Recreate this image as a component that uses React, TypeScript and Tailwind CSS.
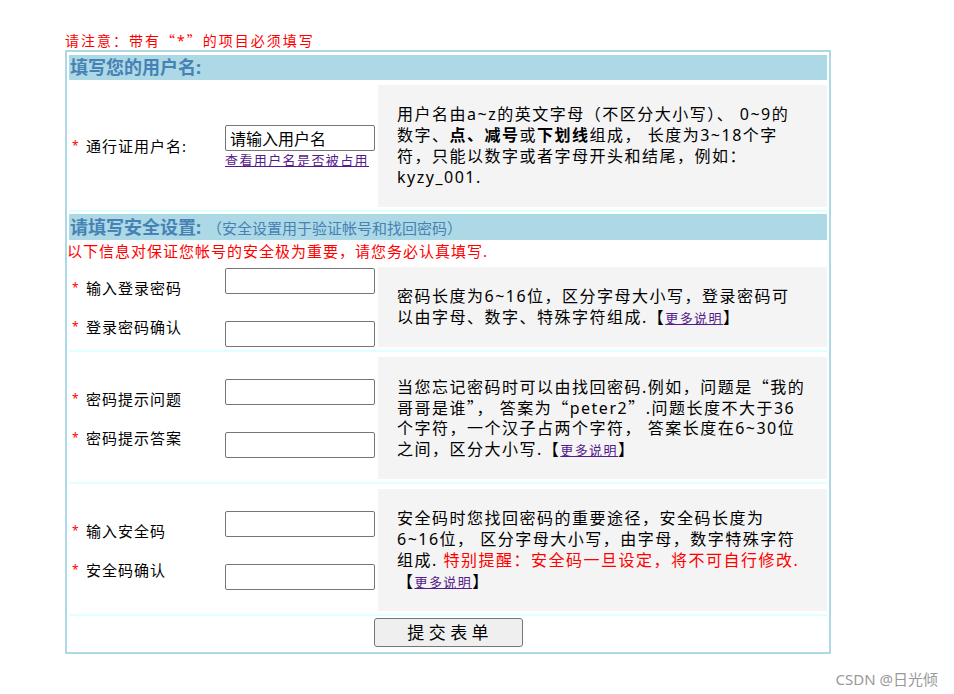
import React from "react";

function Star() {
  return <span className="inline-block w-[14px] text-[12px] text-[#ff0000]">*</span>;
}

// full-width quotes come from the CJK font, not Noto Sans
function Q({ c }: { c: string }) {
  return <span className="font-['Noto_Sans_CJK_SC',sans-serif]">{c}</span>;
}

function Label({ text }: { text: string }) {
  return (
    <div className="flex items-center h-[20px] leading-[20px] text-[15px] tracking-[1px] text-black whitespace-nowrap">
      <Star />
      <span>{text}</span>
    </div>
  );
}

function Field({ value }: { value?: string }) {
  return (
    <input
      defaultValue={value}
      className="block w-[150px] h-[26px] border border-[#767676] rounded-[2px] bg-white px-[4px] text-[16px] text-black outline-none"
    />
  );
}

function More() {
  return (
    <>
      【<a href="#" className="text-[13px] tracking-[1.4px] text-[#551a8b] underline">更多说明</a>】
    </>
  );
}

function Row({ left, lines }: { left: React.ReactNode; lines: React.ReactNode[] }) {
  return (
    <div className="flex pt-[5px] pb-[2px]">
      <div className="w-[309px] flex items-center">{left}</div>
      <div className="w-[449px] bg-[#f4f4f4] px-[19px] py-[19px] flex items-center">
        <div className="text-[16px] tracking-[1.5px] text-black whitespace-nowrap">
          {lines.map((l, i) => (
            <div key={i} className="h-[21px] leading-[21px]">
              {l}
            </div>
          ))}
        </div>
      </div>
    </div>
  );
}

function TwoFields({ a, b }: { a: string; b: string }) {
  return (
    <div className="flex items-center w-full">
      <div className="w-[156px] pl-[3px] flex flex-col gap-[19px]">
        <Label text={a} />
        <Label text={b} />
      </div>
      <div className="flex flex-col gap-[27px]">
        <Field />
        <Field />
      </div>
    </div>
  );
}

function Divider() {
  return <div className="mt-[1px] h-[2px] bg-[#e0ffff]" />;
}

export default function App() {
  return (
    <div className="relative min-h-[694px] bg-white font-['Noto_Sans','Noto_Sans_CJK_SC',sans-serif]">
      <div className="ml-[65px] w-[766px]">
        <div className="pt-[30px] h-[50px] leading-[20px] text-[14px] tracking-[2px] text-[#ff0000] whitespace-nowrap">
          请注意：带有<Q c="“" />*<Q c="”" />的项目必须填写
        </div>
        <div className="border-2 border-[#add8e6] px-[2px] pt-[3px] pb-[3px]">
          <div className="h-[25px] leading-[25px] bg-[#add8e6] pl-[1px] text-[18px] font-bold text-[#4682b4]">
            填写您的用户名:
          </div>

          <Row
            left={
              <div className="flex items-center w-full">
                <div className="w-[156px] pl-[3px]">
                  <Label text="通行证用户名:" />
                </div>
                <div className="flex flex-col">
                  <Field value="请输入用户名" />
                  <a href="#" className="mt-[1px] h-[16px] leading-[16px] text-[13px] tracking-[1.4px] text-[#551a8b] underline whitespace-nowrap">
                    查看用户名是否被占用
                  </a>
                </div>
              </div>
            }
            lines={[
              <>用户名由a~z的英文字母（不区分大小写）、 0~9的</>,
              <>
                数字、<b>点、减号</b>或<b>下划线</b>组成， 长度为3~18个字
              </>,
              <>符，只能以数字或者字母开头和结尾，例如：</>,
              <>kyzy_001.</>,
            ]}
          />
          <Divider />

          <div className="mt-[2px] h-[26px] leading-[26px] bg-[#add8e6] pl-[1px] text-[#4682b4] whitespace-nowrap">
            <span className="text-[18px] font-bold">请填写安全设置:</span>
            <span className="ml-[6px] text-[15px]">（安全设置用于验证帐号和找回密码）</span>
          </div>
          <div className="-ml-[2px] h-[22px] leading-[22px] text-[15px] tracking-[1px] text-[#ff0000] whitespace-nowrap">
            以下信息对保证您帐号的安全极为重要，请您务必认真填写.
          </div>

          <Row
            left={<TwoFields a="输入登录密码" b="登录密码确认" />}
            lines={[
              <>密码长度为6~16位，区分字母大小写，登录密码可</>,
              <>
                以由字母、数字、特殊字符组成.<More />
              </>,
            ]}
          />
          <Divider />

          <Row
            left={<TwoFields a="密码提示问题" b="密码提示答案" />}
            lines={[
              <>
                当您忘记密码时可以由找回密码.例如，问题是<Q c="“" />我的
              </>,
              <>
                哥哥是谁<Q c="”" />， 答案为<Q c="“" />peter2<Q c="”" />.问题长度不大于36
              </>,
              <>个字符，一个汉子占两个字符， 答案长度在6~30位</>,
              <>
                之间，区分大小写.<More />
              </>,
            ]}
          />
          <Divider />

          <Row
            left={<TwoFields a="输入安全码" b="安全码确认" />}
            lines={[
              <>安全码时您找回密码的重要途径，安全码长度为</>,
              <>6~16位， 区分字母大小写，由字母，数字特殊字符</>,
              <>
                组成. <span className="text-[#ff0000]">特别提醒：安全码一旦设定，将不可自行修改.</span>
              </>,
              <More />,
            ]}
          />
          <Divider />

          <div className="flex justify-center pt-[2px] pb-[2px]">
            <button className="w-[149px] h-[29px] border border-[#767676] rounded-[3px] bg-[#efefef] text-[17px] text-black">
              提 交 表 单
            </button>
          </div>
        </div>
      </div>
      <div className="absolute right-[16px] top-[669px] leading-[20px] text-[15px] text-[#999999] whitespace-nowrap">
        CSDN @日光倾
      </div>
    </div>
  );
}
